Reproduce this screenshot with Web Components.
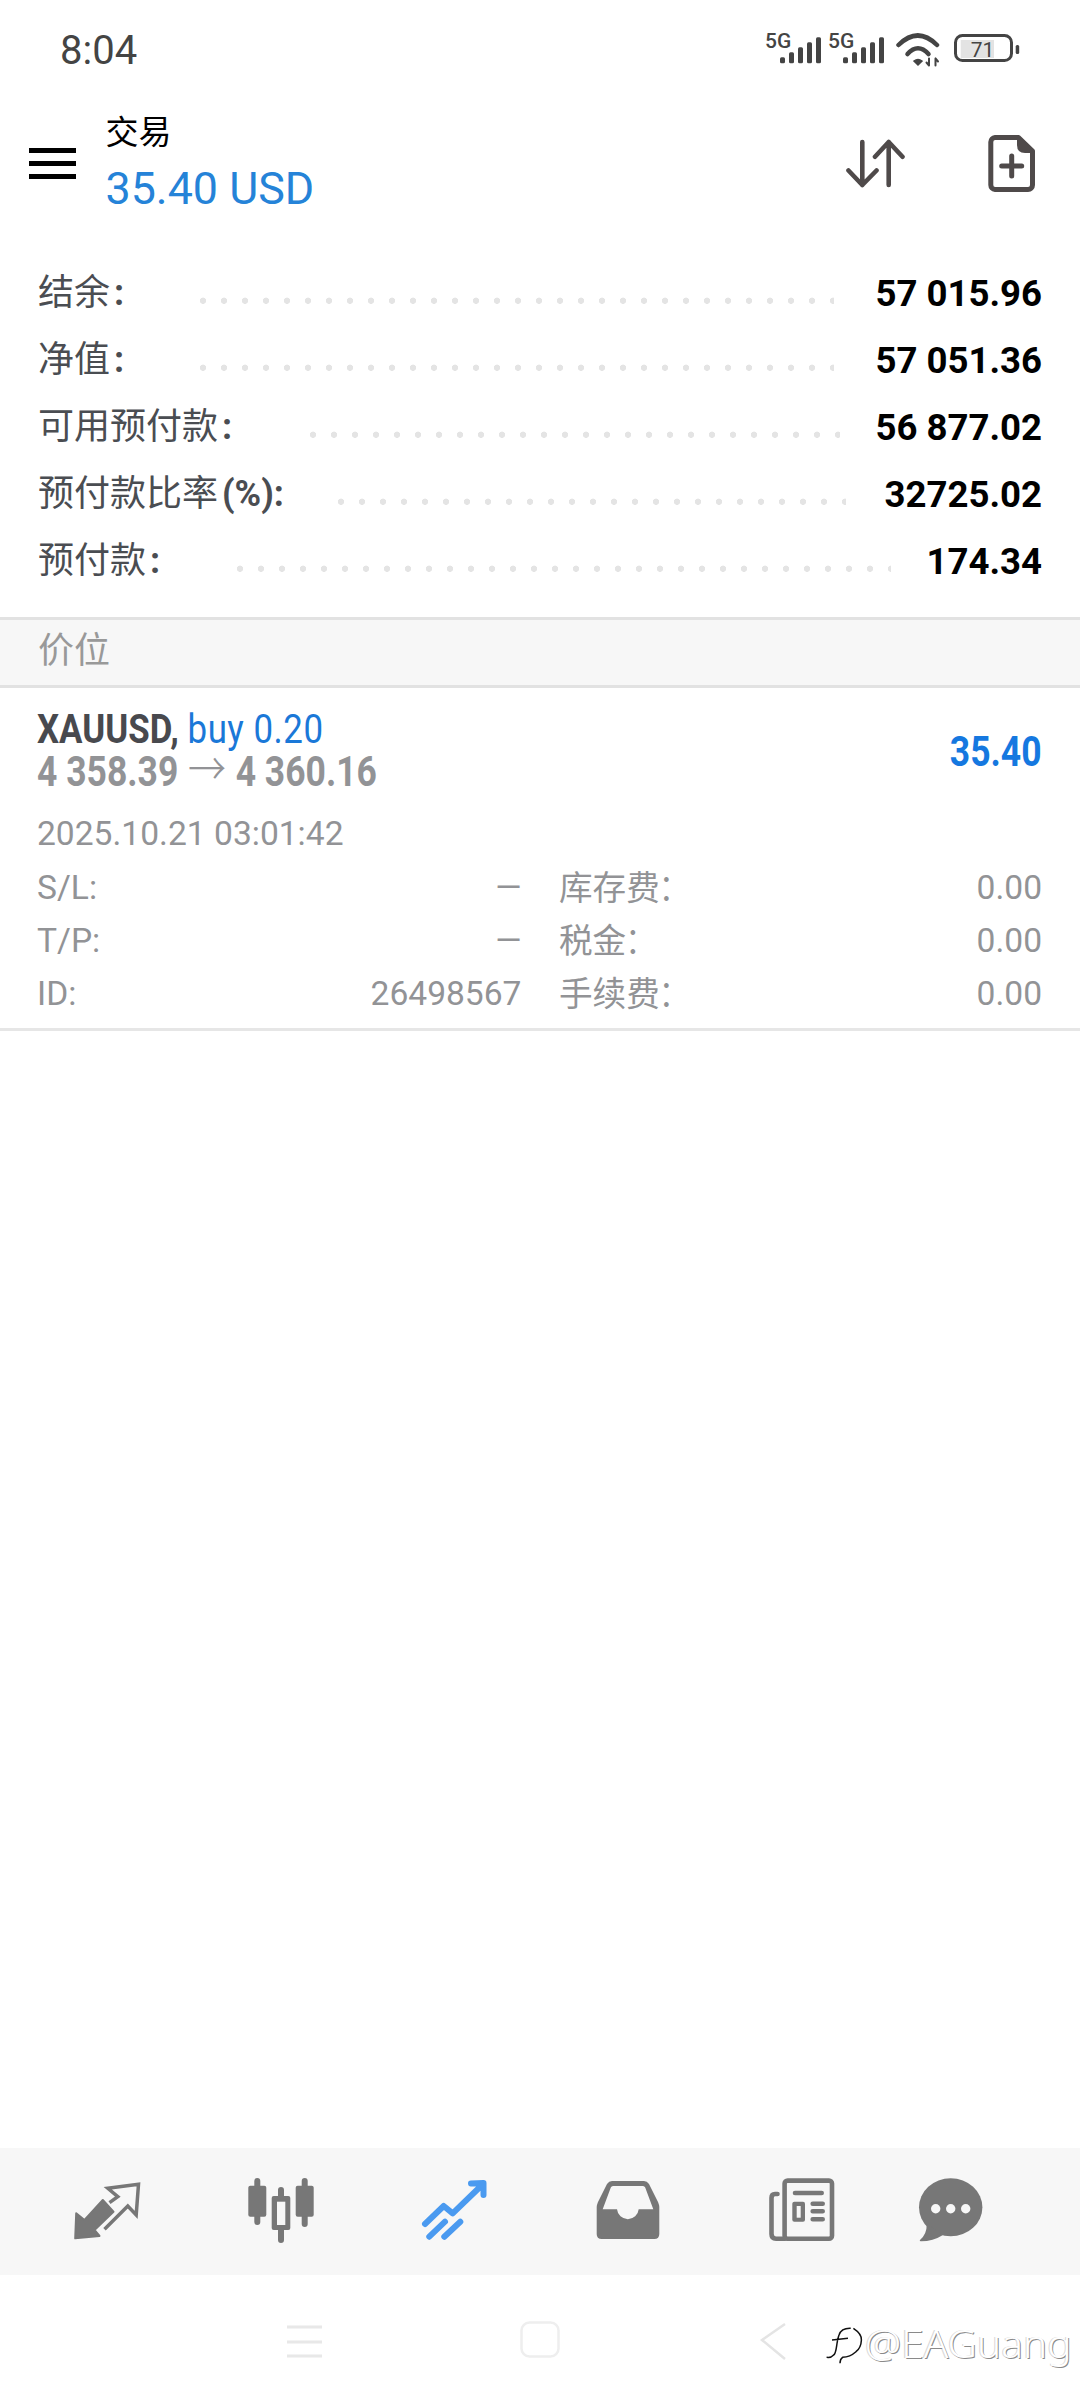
<!DOCTYPE html>
<html lang="zh">
<head>
<meta charset="utf-8">
<title>交易</title>
<style>
html,body{margin:0;padding:0;background:#fff}
body{width:1080px;height:2400px;font-family:Roboto,"Noto Sans CJK SC",sans-serif}
account-row i{font-style:normal;font-weight:700;margin-left:4px;font-family:Roboto,sans-serif}
trade-field i{font-style:normal;margin-left:3px;font-family:Roboto,sans-serif}
position-card i{font-style:normal;font-weight:300;font-size:45px;line-height:40px;font-family:"Noto Sans CJK SC",sans-serif;margin:0 1px}
</style>
</head>
<body>
<trade-app>
  <status-bar slot="top"></status-bar>
  <app-header slot="top" title-text="交易" amount="35.40 USD"></app-header>
  <account-row slot="top" start="161.5" end="41.7"><span slot="label">结余<i>:</i></span><span slot="value">57 015.96</span></account-row>
  <account-row slot="top" start="161.5" end="41.7"><span slot="label">净值<i>:</i></span><span slot="value">57 051.36</span></account-row>
  <account-row slot="top" start="272" end="35.9"><span slot="label">可用预付款<i>:</i></span><span slot="value">56 877.02</span></account-row>
  <account-row slot="top" start="299.6" end="38.2"><span slot="label">预付款比率<i>(%):</i></span><span slot="value">32725.02</span></account-row>
  <account-row slot="top" start="199" end="35.4"><span slot="label">预付款<i>:</i></span><span slot="value">174.34</span></account-row>
  <section-head slot="top">价位</section-head>
  <position-card slot="top">
    <span slot="symbol">XAUUSD,</span>
    <span slot="side">buy 0.20</span>
    <span slot="prices">4 358.39 <i>→</i> 4 360.16</span>
    <span slot="profit">35.40</span>
    <span slot="time">2025.10.21 03:01:42</span>
    <trade-field slot="fields"><span slot="k">S/L:</span><span slot="v">—</span></trade-field>
    <trade-field slot="fields"><span slot="k">库存费<i>:</i></span><span slot="v">0.00</span></trade-field>
    <trade-field slot="fields"><span slot="k">T/P:</span><span slot="v">—</span></trade-field>
    <trade-field slot="fields"><span slot="k">税金<i>:</i></span><span slot="v">0.00</span></trade-field>
    <trade-field slot="fields"><span slot="k">ID:</span><span slot="v">26498567</span></trade-field>
    <trade-field slot="fields"><span slot="k">手续费<i>:</i></span><span slot="v">0.00</span></trade-field>
  </position-card>
  <tab-bar slot="bottom"></tab-bar>
  <system-nav slot="bottom"></system-nav>
</trade-app>
<script>
function def(name, html){
  customElements.define(name, class extends HTMLElement{
    constructor(){
      super();
      const r=this.attachShadow({mode:'open'});
      r.innerHTML = typeof html==='function' ? html(this) : html;
    }
    connectedCallback(){
      if(typeof html==='function') this.shadowRoot.innerHTML = html(this);
    }
  });
}
def('trade-app',`<style>
:host{display:flex;flex-direction:column;width:1080px;height:2400px;background:#fff;overflow:hidden}
.top{display:block}
.sp{flex:1}
</style><div class="top"><slot name="top"></slot></div><div class="sp"></div><slot name="bottom"></slot>`);

const sig=`<svg width="57" height="44" viewBox="0 -12 57 44"><text x="0" y="15" font-family="Roboto" font-weight="500" font-size="21" fill="#444">5G</text><g fill="#444"><rect x="15" y="24.3" width="5" height="6" rx="1.5"/><rect x="24" y="19.3" width="5" height="11" rx="1.5"/><rect x="33" y="14.3" width="5" height="16" rx="1.5"/><rect x="42" y="9.3" width="5" height="21" rx="1.5"/><rect x="51" y="4.3" width="5" height="26" rx="1.5"/></g></svg>`;
def('status-bar',`<style>
:host{display:flex;height:100px;box-sizing:border-box;padding:0 60px;align-items:flex-start;color:#444;font:40px/46px Roboto,sans-serif}
.t{margin-top:28px}
.r{margin-left:auto;display:flex;margin-top:21px;align-items:flex-start}
svg{display:block}
.s2{margin-left:6px}.w{margin-left:11px;margin-top:12px}.b{margin-left:14px;margin-top:13px}
</style><div class="t">8:04</div><div class="r">
${sig}<div class="s2">${sig}</div>
<svg class="w" width="44" height="34" viewBox="0 0 44 34" fill="none" stroke="#444" stroke-linecap="round"><path d="M2.5 12 Q21.8 -7 41 12" stroke-width="4.5"/><path d="M11.5 21 Q22 9.5 32.5 21" stroke-width="4.5"/><path d="M18 28 Q22 25 26 28 L22 32 Z" fill="#444" stroke-width="1.5"/><path d="M33 25.5 V32.5 M30.5 29.5 L33 32.5 M39.5 25.5 V32.5 M39.5 25.5 L42 28.5" stroke-width="2"/></svg>
<svg class="b" width="66" height="30" viewBox="0 0 66 30"><rect x="6.7" y="6" width="33.3" height="18" fill="#e3e3e3"/><rect x="1.5" y="1.5" width="56" height="25" rx="7" fill="none" stroke="#444" stroke-width="3"/><rect x="61.7" y="11" width="3.5" height="9" rx="1.5" fill="#444"/><text x="28.5" y="23" text-anchor="middle" font-family="Roboto" font-size="21" fill="#444">71</text></svg>
</div>`);

def('app-header',el=>`<style>
:host{display:flex;height:160px;box-sizing:border-box;padding:0 38px 0 29px;align-items:flex-start}
.m{width:47px;height:31px;margin-top:48px;display:flex;flex-direction:column;justify-content:space-between}
.m b{display:block;height:5px;background:#000}
.c{margin-left:29.5px;margin-top:13px}
.a{font:33px/40px Roboto,"Noto Sans CJK SC",sans-serif;color:#000}
.v{font:44.8px/52px Roboto,sans-serif;color:#2583d8;margin-top:10px}
.i{margin-left:auto;display:flex;gap:76px;margin-top:33px}
svg{display:block}
</style><div class="m"><b></b><b></b><b></b></div>
<div class="c"><div class="a">${el.getAttribute('title-text')||''}</div><div class="v">${el.getAttribute('amount')||''}</div></div>
<div class="i">
<svg width="60" height="60" viewBox="0 0 60 60" fill="none" stroke="#4f4a4a" stroke-width="4.6" stroke-linecap="round" stroke-linejoin="round"><path d="M16.3 9V52M2.5 37.5L16.3 52L30.5 37.5M42.7 52V9M29 23.7L42.7 9L56.5 23.7"/></svg>
<svg width="60" height="60" viewBox="0 0 60 60"><path d="M13 4.5H36.5L50.5 18V52A4.5 4.5 0 0 1 46 56.5H13A4.5 4.5 0 0 1 8.8 52V9A4.5 4.5 0 0 1 13 4.5Z" fill="none" stroke="#4f4a4a" stroke-width="5" stroke-linejoin="round"/><path d="M35 3V12Q35 20 43 20H52Z" fill="#4f4a4a"/><path d="M19.7 33H39.7M29.7 23V43" stroke="#4f4a4a" stroke-width="5" stroke-linecap="round"/></svg>
</div>`);

def('account-row',el=>`<style>
:host{display:flex;height:67px;box-sizing:border-box;padding:0 38px 0 38px;align-items:center}
.l{flex:0 0 ${el.getAttribute('start')||160}px;font:36px/67px Roboto,"Noto Sans CJK SC",sans-serif;color:#4a4d52;white-space:nowrap}
.d{flex:1;height:67px;margin-right:${el.getAttribute('end')||40}px;
background-image:radial-gradient(circle at 3px 40.7px,#e4e4e4 2.9px,transparent 3.4px);background-size:21px 67px;background-repeat:repeat-x}
.v{font:700 36.6px/67px Roboto,sans-serif;color:#000;white-space:nowrap}
</style><div class="l"><slot name="label"></slot></div><div class="d"></div><div class="v"><slot name="value"></slot></div>`);

def('section-head',`<style>
:host{display:block;margin-top:22px;height:71px;box-sizing:border-box;border-top:3px solid #e2e2e2;border-bottom:3px solid #e2e2e2;background:#f7f7f7;padding-left:38px;font:36px/62px Roboto,"Noto Sans CJK SC",sans-serif;color:#999}
</style><slot></slot>`);

def('position-card',`<style>
:host{display:block;box-sizing:border-box;height:343px;border-bottom:3px solid #e6e6e6;padding:19px 38px 0 37px;font-family:Roboto,"Noto Sans CJK SC",sans-serif}
.top{display:flex;justify-content:space-between;align-items:flex-start;height:90px}
.cond{display:inline-block;white-space:nowrap;transform-origin:left center}
.l1,.l2{height:45px;white-space:nowrap}
.l1{font:41px/45px Roboto,sans-serif}
.l1 .cond{transform:scaleX(.85)}
.l2{font:700 42px/45px Roboto,sans-serif;color:#929396;margin-top:-5px}
.l2 .cond{transform:scaleX(.845)}
.sym{font-weight:700;color:#48494e}
.side{color:#1a78d8;letter-spacing:.6px}
.p{font:700 42px/45px Roboto,sans-serif;color:#1578e0;display:inline-block;transform:scaleX(.845);transform-origin:right center;margin-top:21.5px}
.time{font:33.6px/40px Roboto,sans-serif;color:#929396;margin-top:17px}
.grid{display:grid;grid-template-columns:484.5px 1fr;column-gap:37.5px;margin-top:7px}
</style><div class="top"><div><div class="l1"><span class="cond"><span class="sym"><slot name="symbol"></slot></span> <span class="side"><slot name="side"></slot></span></span></div><div class="l2"><span class="cond"><slot name="prices"></slot></span></div></div><div class="p"><slot name="profit"></slot></div></div>
<div class="time"><slot name="time"></slot></div><div class="grid"><slot name="fields"></slot></div>`);

def('trade-field',`<style>
:host{display:flex;justify-content:space-between;height:53px;font:33.6px/53px Roboto,"Noto Sans CJK SC",sans-serif;color:#929396;white-space:nowrap}
</style><slot name="k"></slot><slot name="v"></slot>`);

const G='#777';
const icons=[
`<path d="M4.2 64.3L5.2 39.3L13.5 46L31.8 26L42.5 37.7L23.5 56L28.5 62Z" fill="${G}" stroke="${G}" stroke-width="2" stroke-linejoin="round"/><path d="M38.5 28.7L46.8 22.7L36.8 14.3L67.5 10.3L65.2 41L56.8 32L33.5 55.3" fill="none" stroke="${G}" stroke-width="3.5"/>`,
`<g stroke="${G}" stroke-width="6" stroke-linecap="round" fill="none"><path d="M12.3 7V48M36 16V66M59.7 7V50"/></g><g fill="${G}"><rect x="3.3" y="11.7" width="18" height="31" rx="2"/><rect x="50.7" y="11.7" width="18" height="31" rx="2"/></g><rect x="26.7" y="22" width="18.6" height="34" rx="2" fill="${G}"/><rect x="32" y="27.7" width="8.3" height="23.3" fill="#f7f7f7"/>`,
`<g stroke="#4a9af0" stroke-width="6" stroke-linecap="round" stroke-linejoin="round" fill="none"><path d="M7 50L25.7 32L34.7 39.3L63 12M53 9.5L65.5 9L65.5 21M11.3 62.7L27 47.7M26.3 62.7L42.3 47.7"/></g>`,
`<path d="M20 7H52Q55 7 57 10L66 28Q67.3 31 67.3 33V60Q67.3 65 62.3 65H9.7Q4.7 65 4.7 60V33Q4.7 31 6 28L15 10Q17 7 20 7Z" fill="${G}"/><path d="M21 12H51Q52.5 12 53.2 13.5L61.3 35.3H46.7A10.9 10.9 0 0 1 25 35.3H10.7L18.8 13.5Q19.5 12 21 12Z" fill="#f7f7f7"/>`,
`<g fill="none" stroke="${G}" stroke-width="4.6" stroke-linecap="round" stroke-linejoin="round"><rect x="19.6" y="6.6" width="47.4" height="58.1" rx="3"/><path d="M12.5 20H10Q6.5 20 6.5 24V60Q6.5 64.7 11 64.7H20M30 19H56.7M47.7 29.7H57.7M47.7 37.3H57.7M47.7 45.3H57.7"/></g><rect x="27.3" y="27.7" width="12.7" height="20" rx="2" fill="${G}"/><rect x="31.7" y="32" width="4" height="11.7" fill="#f7f7f7"/>`,
`<ellipse cx="35.7" cy="33.3" rx="31.7" ry="29" fill="${G}"/><path d="M11.7 50Q12 60 5 66Q4 67.3 6 67.3Q18 67.3 28 61Z" fill="${G}"/><g fill="#f7f7f7"><circle cx="20.7" cy="34.7" r="4.7"/><circle cx="35.7" cy="34.7" r="4.7"/><circle cx="50.7" cy="34.7" r="4.7"/></g>`
];
def('tab-bar',`<style>
:host{display:grid;grid-template-columns:repeat(5,173.5px) 125px;height:127px;box-sizing:border-box;padding:26px 0 0 20.5px;background:#f7f7f7;justify-items:center;align-items:start}
svg{display:block}
</style>`+icons.map(i=>`<svg width="72" height="72" viewBox="0 0 72 72">${i}</svg>`).join(''));

def('system-nav',`<style>
:host{display:flex;position:relative;height:125px;box-sizing:border-box;background:#fff;padding:0 0 0 286px;align-items:flex-start}
svg{display:block;overflow:visible}
.hm{margin-top:50px}.sq{margin-left:197px;margin-top:46px}.bk{margin-left:200px;margin-top:47px}
.wm{position:absolute;left:829px;top:46px;display:flex;align-items:flex-start}
.wm svg{margin-top:4px}
.wm span{font:38px/44px "Noto Sans","Liberation Sans",sans-serif;font-weight:300;color:#fff;text-shadow:1px 1px 0 #8a8a8a,-1px 0 0 #d8d8d8;margin-left:2px;transform:scaleX(1.07);transform-origin:left center;white-space:nowrap}
</style>
<svg class="hm" width="37" height="36" viewBox="0 0 37 36" stroke="#e8e8e8" stroke-width="3"><path d="M1 2H36M1 17H36M1 31H36"/></svg>
<svg class="sq" width="40" height="38" viewBox="0 0 40 38" fill="none" stroke="#eeeeee" stroke-width="2.5"><rect x="1.5" y="1.5" width="37" height="34" rx="8"/></svg>
<svg class="bk" width="28" height="40" viewBox="0 0 28 40" fill="none" stroke="#e4e4e4" stroke-width="2.5"><path d="M25 2L2 18L25 37"/></svg>
<div class="wm"><svg width="34" height="40" viewBox="0 0 34 40" fill="none" stroke="#111" stroke-width="1.5"><path d="M21.7 3.3C14 3 11 7 10 10C7 18 8 28 4.6 30Q2 33 -2.4 32.3M3 15L19 13.3M24.4 3.3Q33 9 32.4 15Q32 23 27 26.7Q21 32 13.6 32.3Q11 34 11 38.3"/></svg><span>@EAGuang</span></div>`);
</script>
</body>
</html>
